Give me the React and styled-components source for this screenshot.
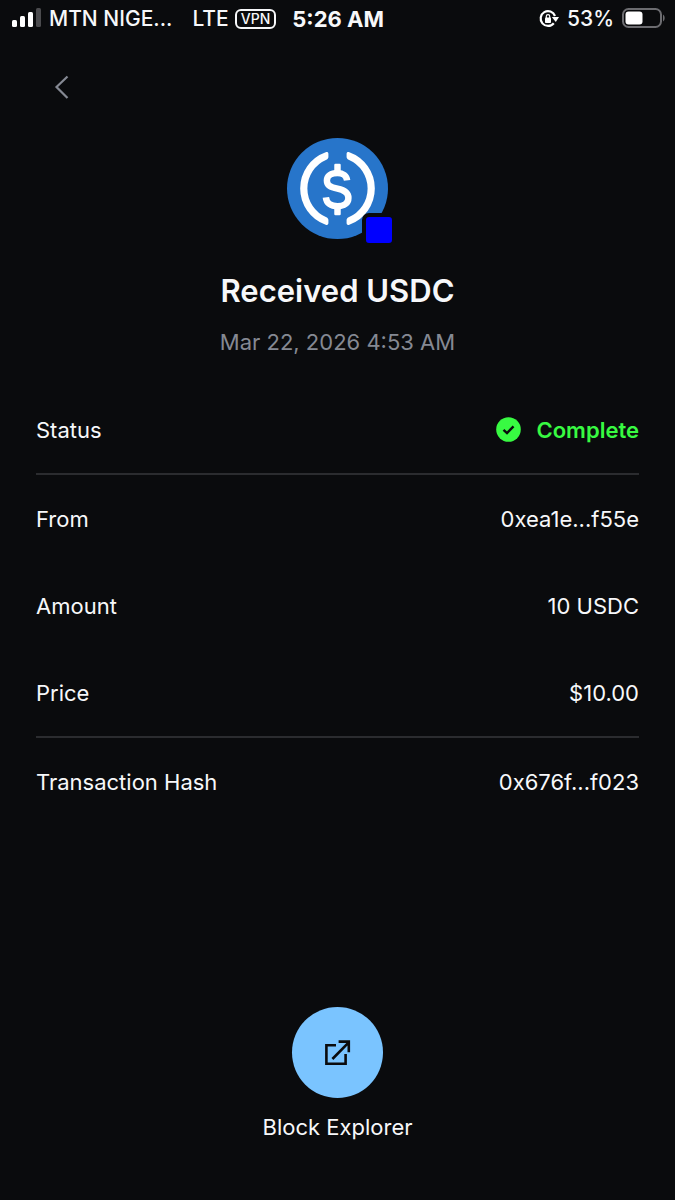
import React from 'react';

import styled, { createGlobalStyle } from 'styled-components';

const Colors = {
  background: '#0a0b0d',
  textColor: '#f7f8fa',
  muted: '#858993',
  divider: '#2b2c2f',
  success: '#38fa42',
  accent: '#7ac4ff',
  usdc: '#2775ca',
  base: '#0000ff',
};

const GlobalStyle = createGlobalStyle`
  * {
    box-sizing: border-box;
  }

  body {
    margin: 0;
    background: ${Colors.background};
    color: ${Colors.textColor};
    font-family: Inter, 'Liberation Sans', sans-serif;
  }
`;

const Screen = styled.div`
  display: flex;
  flex-direction: column;
  min-height: 100vh;
`;

const StatusBar = styled.header`
  display: flex;
  align-items: center;
  justify-content: space-between;
  height: 38px;
  padding: 0 10px 0 12px;
  font-size: 21px;
  font-weight: 500;
  line-height: 24px;
  white-space: nowrap;

  svg {
    display: block;
  }
`;

const StatusGroup = styled.div`
  display: flex;
  align-items: center;
  gap: 8px;
`;

const Network = styled.span`
  margin-left: 12px;
`;

const VpnBadge = styled.span`
  margin-left: -2px;
  padding: 0 4px;
  border: 2px solid ${Colors.textColor};
  border-radius: 6px;
  font-size: 14px;
  line-height: 16px;
`;

const Clock = styled.time`
  margin-left: 8px;
  font-size: 22px;
  font-weight: 700;
`;

const BackButton = styled.button`
  display: flex;
  align-self: flex-start;
  margin: 28px 0 0 44px;
  padding: 8px;
  border: 0;
  background: none;
  color: ${Colors.muted};
  cursor: pointer;
`;

const Summary = styled.section`
  display: flex;
  flex-direction: column;
  align-items: center;
  padding-top: 30px;
`;

const TokenIcon = styled.div`
  position: relative;

  svg {
    display: block;
  }
`;

const ChainBadge = styled.span`
  position: absolute;
  right: -8px;
  bottom: -8px;
  width: 34px;
  height: 34px;
  border: 4px solid ${Colors.background};
  border-radius: 7px;
  background: ${Colors.base};
`;

const Title = styled.h1`
  margin: 32px 0 0;
  font-size: 31px;
  font-weight: 600;
  line-height: 40px;
`;

const Timestamp = styled.p`
  margin: 16px 0 0;
  color: ${Colors.muted};
  font-size: 22px;
  line-height: 30px;
`;

const Details = styled.dl`
  margin: 29px 36px 0;
`;

const Group = styled.div`
  & + & {
    border-top: 2px solid ${Colors.divider};
  }
`;

const Row = styled.div`
  display: flex;
  align-items: center;
  justify-content: space-between;
  height: 87px;
  font-size: 22px;
  line-height: 28px;
`;

const Value = styled.dd`
  display: flex;
  align-items: center;
  gap: 16px;
  margin: 0;
  color: ${props => (props.$success ? Colors.success : 'inherit')};
  font-weight: ${props => (props.$success ? 600 : 400)};
`;

const Actions = styled.footer`
  display: flex;
  justify-content: center;
  margin-top: auto;
  padding-bottom: 59px;
`;

const Action = styled.a`
  display: flex;
  flex-direction: column;
  align-items: center;
  gap: 15px;
  color: inherit;
  font-size: 22px;
  line-height: 28px;
  text-decoration: none;
`;

const ActionIcon = styled.span`
  display: grid;
  place-items: center;
  width: 91px;
  height: 91px;
  border-radius: 50%;
  background: ${Colors.accent};
  color: ${Colors.background};
`;

const SignalIcon = () => (
  <svg width="29" height="22" viewBox="0 0 29 22" fill="#fff" aria-hidden="true">
    <rect y="12" width="5" height="7" rx="1.5" />
    <rect x="8" y="8" width="5" height="11" rx="1.5" />
    <rect x="16" y="4" width="5" height="15" rx="1.5" />
    <rect x="24" width="5" height="19" rx="1.5" fill="#4b4b4e" />
  </svg>
);

const RotationLockIcon = () => (
  <svg width="20" height="20" viewBox="0 0 20 20" fill="none" aria-hidden="true">
    <path d="M14.8 14.2A7.4 7.4 0 1 1 16 7" stroke="#fff" strokeWidth="2.2" />
    <path d="M12.8 8h7.2l-3.2 5z" fill="#fff" />
    <rect x="6" y="8.6" width="6" height="5.4" rx="0.8" fill="#fff" />
    <path d="M7.3 9V7.3a1.7 1.7 0 0 1 3.4 0V9" stroke="#fff" strokeWidth="1.2" />
  </svg>
);

const BatteryIcon = () => (
  <svg width="43" height="22" viewBox="0 0 43 22" fill="none" aria-hidden="true">
    <rect x="1" y="1" width="38" height="18" rx="5.5" stroke="#6c6c70" strokeWidth="2" />
    <rect x="3.5" y="3.5" width="17" height="13" rx="3" fill="#fff" />
    <path d="M41 6.5c2.2 1.4 2.2 5.6 0 7z" fill="#6c6c70" />
  </svg>
);

const BackIcon = () => (
  <svg width="20" height="26" viewBox="0 0 20 26" fill="none" aria-hidden="true">
    <path d="M15.5 2.5L4.5 13l11 11" stroke="currentColor" strokeWidth="2.2" />
  </svg>
);

const UsdcIcon = () => (
  <svg width="101" height="101" viewBox="0 0 100 100" fill="none" aria-hidden="true">
    <circle cx="50" cy="50" r="50" fill={Colors.usdc} />
    <g fill="#fff">
      <path d="M41 15.8c0-1.6-1.2-2.2-2.7-1.6a38 38 0 0 0 0 71.6c1.5.6 2.7 0 2.7-1.6v-3c0-1.2-.7-2.1-2-2.7a31 31 0 0 1 0-57c1.3-.6 2-1.5 2-2.7z" />
      <path d="M59 15.8c0-1.6 1.2-2.2 2.7-1.6a38 38 0 0 1 0 71.6c-1.5.6-2.7 0-2.7-1.6v-3c0-1.2.7-2.1 2-2.7a31 31 0 0 0 0-57c-1.3-.6-2-1.5-2-2.7z" />
      <rect x="46.8" y="25.5" width="6.4" height="9" rx="1.2" />
      <rect x="46.8" y="67.5" width="6.4" height="9" rx="1.2" />
    </g>
    <path
      d="M59.5 42C59 37.5 55.5 34.7 50 34.7C43.5 34.7 39.5 37.8 39.5 42C39.5 47 43 48.7 50 50.2C57 51.7 60.8 54 60.8 59.3C60.8 64.5 56.5 67.5 50 67.5C43.5 67.5 39 64.5 38.5 58.8"
      stroke="#fff"
      strokeWidth="6.4"
    />
  </svg>
);

const CheckIcon = () => (
  <svg width="25" height="25" viewBox="0 0 25 25" fill="none" aria-hidden="true">
    <circle cx="12.5" cy="12.5" r="12.3" fill={Colors.success} />
    <path d="M7.5 12.8l3.5 3.3 6.5-6.7" stroke={Colors.background} strokeWidth="2.4" />
  </svg>
);

const ExternalIcon = () => (
  <svg width="28" height="28" viewBox="0 0 28 28" fill="none" aria-hidden="true">
    <path
      d="M12 6.2H2.4v18.6h19.2V15M8.4 20L25 3.2M14.6 2.6h10.2v10.6"
      stroke="currentColor"
      strokeWidth="2.6"
    />
  </svg>
);

const groups = [
  [{ label: 'Status', value: 'Complete', success: true }],
  [
    { label: 'From', value: '0xea1e...f55e' },
    { label: 'Amount', value: '10 USDC' },
    { label: 'Price', value: '$10.00' },
  ],
  [{ label: 'Transaction Hash', value: '0x676f...f023' }],
];

const App = () => (
  <>
    <GlobalStyle />
    <Screen>
      <StatusBar>
        <StatusGroup>
          <SignalIcon />
          <span>MTN NIGE...</span>
          <Network>LTE</Network>
          <VpnBadge>VPN</VpnBadge>
          <Clock>5:26 AM</Clock>
        </StatusGroup>
        <StatusGroup>
          <RotationLockIcon />
          <span>53%</span>
          <BatteryIcon />
        </StatusGroup>
      </StatusBar>

      <BackButton type="button" aria-label="Back">
        <BackIcon />
      </BackButton>

      <Summary>
        <TokenIcon>
          <UsdcIcon />
          <ChainBadge />
        </TokenIcon>
        <Title>Received USDC</Title>
        <Timestamp>Mar 22, 2026 4:53 AM</Timestamp>
      </Summary>

      <Details>
        {groups.map(rows => (
          <Group key={rows[0].label}>
            {rows.map(({ label, value, success }) => (
              <Row key={label}>
                <dt>{label}</dt>
                <Value $success={success}>
                  {success && <CheckIcon />}
                  {value}
                </Value>
              </Row>
            ))}
          </Group>
        ))}
      </Details>

      <Actions>
        <Action href="#explorer">
          <ActionIcon>
            <ExternalIcon />
          </ActionIcon>
          Block Explorer
        </Action>
      </Actions>
    </Screen>
  </>
);

export default App;
